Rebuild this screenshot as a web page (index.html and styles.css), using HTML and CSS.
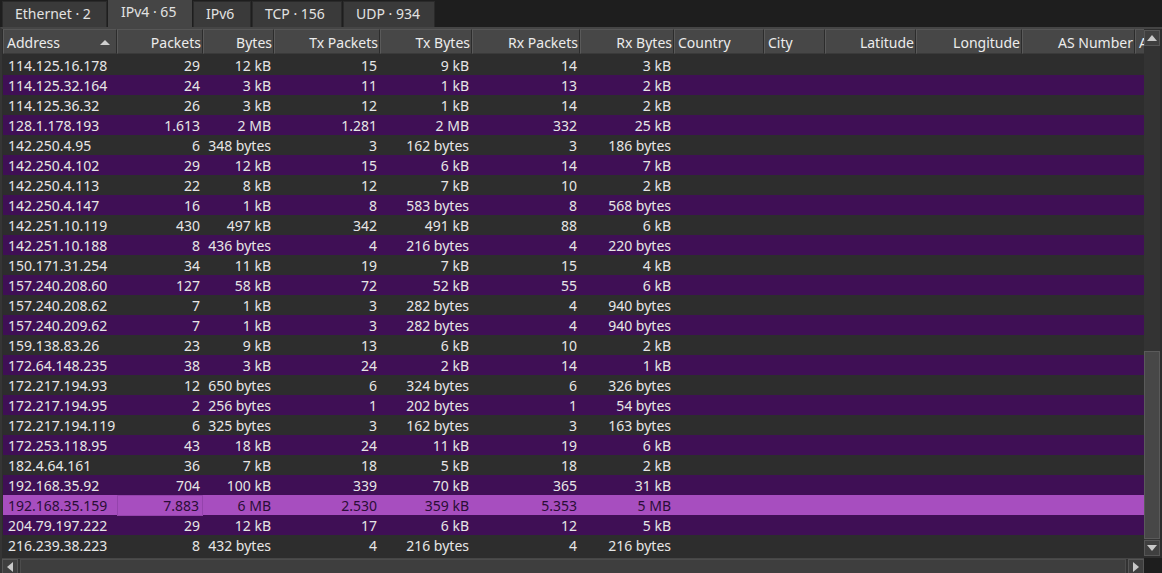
FILE: index.html
```html
<!DOCTYPE html>
<html>
<head>
<meta charset="utf-8">
<link rel="stylesheet" href="styles.css">
</head>
<body>
<div class="tabs">
  <div class="tab">Ethernet · 2</div>
  <div class="tab active">IPv4 · 65</div>
  <div class="tab">IPv6</div>
  <div class="tab">TCP · 156</div>
  <div class="tab">UDP · 934</div>
</div>
<div class="panel">
  <div class="main">
    <div class="table">
      <div class="head">
        <div class="h l sorted">Address<span class="sort"></span></div>
        <div class="h">Packets</div>
        <div class="h">Bytes</div>
        <div class="h">Tx Packets</div>
        <div class="h">Tx Bytes</div>
        <div class="h">Rx Packets</div>
        <div class="h">Rx Bytes</div>
        <div class="h l">Country</div>
        <div class="h l">City</div>
        <div class="h">Latitude</div>
        <div class="h">Longitude</div>
        <div class="h">AS Number</div>
        <div class="h l last">AS Organization</div>
      </div>
      <div class="body">
        <div class="row"><span class="c l">114.125.16.178</span><span class="c">29</span><span class="c">12 kB</span><span class="c">15</span><span class="c">9 kB</span><span class="c">14</span><span class="c">3 kB</span></div>
        <div class="row alt"><span class="c l">114.125.32.164</span><span class="c">24</span><span class="c">3 kB</span><span class="c">11</span><span class="c">1 kB</span><span class="c">13</span><span class="c">2 kB</span></div>
        <div class="row"><span class="c l">114.125.36.32</span><span class="c">26</span><span class="c">3 kB</span><span class="c">12</span><span class="c">1 kB</span><span class="c">14</span><span class="c">2 kB</span></div>
        <div class="row alt"><span class="c l">128.1.178.193</span><span class="c">1.613</span><span class="c">2 MB</span><span class="c">1.281</span><span class="c">2 MB</span><span class="c">332</span><span class="c">25 kB</span></div>
        <div class="row"><span class="c l">142.250.4.95</span><span class="c">6</span><span class="c">348 bytes</span><span class="c">3</span><span class="c">162 bytes</span><span class="c">3</span><span class="c">186 bytes</span></div>
        <div class="row alt"><span class="c l">142.250.4.102</span><span class="c">29</span><span class="c">12 kB</span><span class="c">15</span><span class="c">6 kB</span><span class="c">14</span><span class="c">7 kB</span></div>
        <div class="row"><span class="c l">142.250.4.113</span><span class="c">22</span><span class="c">8 kB</span><span class="c">12</span><span class="c">7 kB</span><span class="c">10</span><span class="c">2 kB</span></div>
        <div class="row alt"><span class="c l">142.250.4.147</span><span class="c">16</span><span class="c">1 kB</span><span class="c">8</span><span class="c">583 bytes</span><span class="c">8</span><span class="c">568 bytes</span></div>
        <div class="row"><span class="c l">142.251.10.119</span><span class="c">430</span><span class="c">497 kB</span><span class="c">342</span><span class="c">491 kB</span><span class="c">88</span><span class="c">6 kB</span></div>
        <div class="row alt"><span class="c l">142.251.10.188</span><span class="c">8</span><span class="c">436 bytes</span><span class="c">4</span><span class="c">216 bytes</span><span class="c">4</span><span class="c">220 bytes</span></div>
        <div class="row"><span class="c l">150.171.31.254</span><span class="c">34</span><span class="c">11 kB</span><span class="c">19</span><span class="c">7 kB</span><span class="c">15</span><span class="c">4 kB</span></div>
        <div class="row alt"><span class="c l">157.240.208.60</span><span class="c">127</span><span class="c">58 kB</span><span class="c">72</span><span class="c">52 kB</span><span class="c">55</span><span class="c">6 kB</span></div>
        <div class="row"><span class="c l">157.240.208.62</span><span class="c">7</span><span class="c">1 kB</span><span class="c">3</span><span class="c">282 bytes</span><span class="c">4</span><span class="c">940 bytes</span></div>
        <div class="row alt"><span class="c l">157.240.209.62</span><span class="c">7</span><span class="c">1 kB</span><span class="c">3</span><span class="c">282 bytes</span><span class="c">4</span><span class="c">940 bytes</span></div>
        <div class="row"><span class="c l">159.138.83.26</span><span class="c">23</span><span class="c">9 kB</span><span class="c">13</span><span class="c">6 kB</span><span class="c">10</span><span class="c">2 kB</span></div>
        <div class="row alt"><span class="c l">172.64.148.235</span><span class="c">38</span><span class="c">3 kB</span><span class="c">24</span><span class="c">2 kB</span><span class="c">14</span><span class="c">1 kB</span></div>
        <div class="row"><span class="c l">172.217.194.93</span><span class="c">12</span><span class="c">650 bytes</span><span class="c">6</span><span class="c">324 bytes</span><span class="c">6</span><span class="c">326 bytes</span></div>
        <div class="row alt"><span class="c l">172.217.194.95</span><span class="c">2</span><span class="c">256 bytes</span><span class="c">1</span><span class="c">202 bytes</span><span class="c">1</span><span class="c">54 bytes</span></div>
        <div class="row"><span class="c l">172.217.194.119</span><span class="c">6</span><span class="c">325 bytes</span><span class="c">3</span><span class="c">162 bytes</span><span class="c">3</span><span class="c">163 bytes</span></div>
        <div class="row alt"><span class="c l">172.253.118.95</span><span class="c">43</span><span class="c">18 kB</span><span class="c">24</span><span class="c">11 kB</span><span class="c">19</span><span class="c">6 kB</span></div>
        <div class="row"><span class="c l">182.4.64.161</span><span class="c">36</span><span class="c">7 kB</span><span class="c">18</span><span class="c">5 kB</span><span class="c">18</span><span class="c">2 kB</span></div>
        <div class="row alt"><span class="c l">192.168.35.92</span><span class="c">704</span><span class="c">100 kB</span><span class="c">339</span><span class="c">70 kB</span><span class="c">365</span><span class="c">31 kB</span></div>
        <div class="row selected"><span class="c l">192.168.35.159</span><span class="c focus">7.883</span><span class="c">6 MB</span><span class="c">2.530</span><span class="c">359 kB</span><span class="c">5.353</span><span class="c">5 MB</span></div>
        <div class="row alt"><span class="c l">204.79.197.222</span><span class="c">29</span><span class="c">12 kB</span><span class="c">17</span><span class="c">6 kB</span><span class="c">12</span><span class="c">5 kB</span></div>
        <div class="row"><span class="c l">216.239.38.223</span><span class="c">8</span><span class="c">432 bytes</span><span class="c">4</span><span class="c">216 bytes</span><span class="c">4</span><span class="c">216 bytes</span></div>
      </div>
    </div>
    <div class="vscroll">
      <div class="sbtn"><svg width="10" height="6" viewBox="0 0 10 6"><polygon points="0,6 10,6 5,0" fill="#c8c8c8"/></svg></div>
      <div class="vtrack"><div class="vthumb"></div></div>
      <div class="sbtn"><svg width="10" height="6" viewBox="0 0 10 6"><polygon points="0,0 10,0 5,6" fill="#c8c8c8"/></svg></div>
    </div>
  </div>
  <div class="bottom">
    <div class="hscroll">
      <div class="hbtn"><svg width="6" height="10" viewBox="0 0 6 10"><polygon points="6,0 6,10 0,5" fill="#c8c8c8"/></svg></div>
      <div class="htrack"><div class="hthumb"></div></div>
      <div class="hbtn"><svg width="6" height="10" viewBox="0 0 6 10"><polygon points="0,0 0,10 6,5" fill="#c8c8c8"/></svg></div>
    </div>
    <div class="corner"></div>
  </div>
</div>
</body>
</html>
```
FILE: styles.css
```css
* { box-sizing: border-box; }
html, body {
  margin: 0;
  padding: 0;
  width: 1162px;
  height: 573px;
  overflow: hidden;
  background: #1e1e1e;
  font-family: "Noto Sans", "Open Sans", sans-serif;
  font-size: 14px;
  color: #e6e6e6;
}
.tabs {
  display: flex;
  height: 27px;
  padding-left: 2px;
  align-items: flex-end;
}
.tab {
  height: 26px;
  margin-right: 1px;
  padding: 0 12px 0 12px;
  background: #3a3a3a;
  border: 1px solid #2a2a2a;
  border-bottom: none;
  line-height: 24px;
  color: #e2e2e2;
  white-space: nowrap;
}
.tab:nth-child(1) { width: 105px; }
.tab:nth-child(2) { width: 84px; }
.tab:nth-child(3) { width: 58px; }
.tab:nth-child(4) { width: 90px; }
.tab:nth-child(5) { width: 92px; }
.tab.active {
  height: 28px;
  margin-bottom: -1px;
  background: #454545;
  border-color: #454545;
  line-height: 22px;
  position: relative;
  z-index: 1;
}
.panel {
  height: 546px;
  background: #2d2d2d;
  border-top: 2px solid #454545;
  border-left: 2px solid #353535;
  display: flex;
  flex-direction: column;
}
.main {
  display: flex;
  height: 529px;
  padding-left: 1px;
}
.table {
  width: 1141px;
  overflow: hidden;
  background: #2d2d2d;
}
.head, .row {
  display: grid;
  grid-template-columns: 114px 86px 71px 106px 92px 108px 94px 90px 61px 91px 106px 113px 120px;
}
.head {
  height: 26px;
  border-bottom: 1px solid #2d2d2d;
}
.h {
  background: #474747;
  border-top: 1px solid #565656;
  border-right: 1px solid #2c2c2c;
  border-left: 1px solid #5a5a5a;
  border-bottom: 1px solid #3a3a3a;
  text-align: right;
  padding: 2px 1px 0 3px;
  line-height: 22px;
  color: #ececec;
  white-space: nowrap;
  overflow: hidden;
}
.h.l { text-align: left; }
.h.sorted { position: relative; }
.sort {
  position: absolute;
  right: 6px;
  top: 10px;
  width: 0;
  height: 0;
  border-left: 5px solid transparent;
  border-right: 5px solid transparent;
  border-bottom: 5px solid #cfcfcf;
}
.row {
  height: 20px;
  line-height: 21px;
  background: #2d2d2d;
}
.row.alt { background: #3f0f55; }
.row.selected { background: #a74ebf; color: #2a0d36; }
.c {
  text-align: right;
  padding-right: 3px;
  white-space: nowrap;
}
.c.l { text-align: left; padding-left: 5px; }
.c.focus { border: 1px solid #9443ac; line-height: 19px; }
.vscroll {
  width: 16px;
  margin-top: 1px;
  display: flex;
  flex-direction: column;
  background: #333333;
}
.sbtn {
  height: 16px;
  background: #3f3f3f;
  border: 1px solid #565656;
  display: flex;
  align-items: center;
  justify-content: center;
}
.vtrack {
  flex: 1;
  display: flex;
  flex-direction: column;
  justify-content: flex-end;
  padding: 1px 0 1px 0;
}
.vthumb {
  height: 188px;
  background: #474747;
  border: 1px solid #5a5a5a;
}
.bottom {
  display: flex;
  height: 15px;
  margin-top: 2px;
}
.hscroll {
  width: 1142px;
  display: flex;
  border-top: 1px solid #464646;
  background: #333333;
}
.hbtn {
  width: 16px;
  height: 16px;
  background: #3f3f3f;
  border: 1px solid #565656;
  display: flex;
  align-items: center;
  justify-content: center;
}
.htrack {
  flex: 1;
  padding: 0 2px 0 2px;
}
.hthumb {
  height: 16px;
  background: #3e3e3e;
  border: 1px solid #4c4c4c;
}
.corner {
  flex: 1;
  background: #1e1e1e;
}
```
